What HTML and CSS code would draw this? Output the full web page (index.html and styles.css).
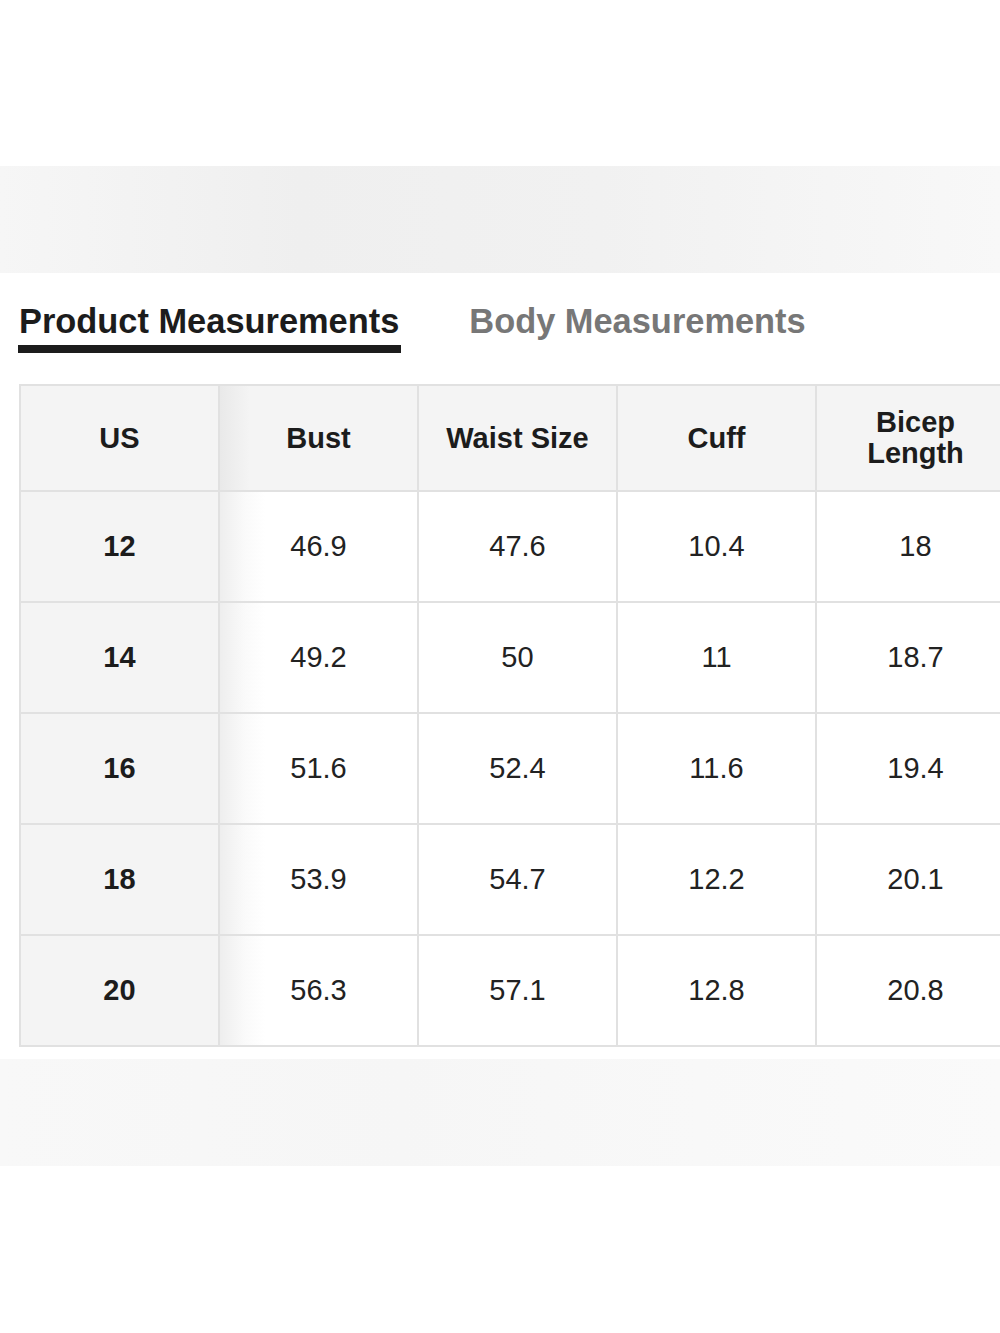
FILE: index.html
```html
<!DOCTYPE html>
<html>
<head>
<meta charset="utf-8">
<link rel="stylesheet" href="styles.css">
</head>
<body>
<div class="page">
  <div class="band band-top"></div>
  <div class="tabs">
    <div class="tab active">Product Measurements</div>
    <div class="tab">Body Measurements</div>
  </div>
  <table class="sizes">
    <thead>
      <tr>
        <th class="first">US</th>
        <th class="second">Bust</th>
        <th>Waist Size</th>
        <th>Cuff</th>
        <th>Bicep<br>Length</th>
      </tr>
    </thead>
    <tbody>
      <tr><th class="first">12</th><td class="second">46.9</td><td>47.6</td><td>10.4</td><td>18</td></tr>
      <tr><th class="first">14</th><td class="second">49.2</td><td>50</td><td>11</td><td>18.7</td></tr>
      <tr><th class="first">16</th><td class="second">51.6</td><td>52.4</td><td>11.6</td><td>19.4</td></tr>
      <tr><th class="first">18</th><td class="second">53.9</td><td>54.7</td><td>12.2</td><td>20.1</td></tr>
      <tr><th class="first">20</th><td class="second">56.3</td><td>57.1</td><td>12.8</td><td>20.8</td></tr>
    </tbody>
  </table>
  <div class="band band-bottom"></div>
</div>
</body>
</html>
```
FILE: styles.css
```css
html, body {
  margin: 0;
  padding: 0;
  background: #ffffff;
  overflow: hidden;
}
body {
  width: 1000px;
  height: 1333px;
  font-family: "Liberation Sans", Arial, sans-serif;
  color: #222222;
}
.page {
  padding-top: 166px;
}
.band {
  height: 107px;
}
.band-top {
  background: linear-gradient(90deg, #f6f6f6 0%, #efefef 30%, #f1f1f1 60%, #f8f8f8 100%);
}
.band-bottom {
  margin-top: 12px;
  background: linear-gradient(90deg, #f8f8f8 0%, #f6f6f6 40%, #fafafa 100%);
}
.tabs {
  display: flex;
  align-items: flex-start;
  padding: 29px 0 0 18px;
  gap: 67px;
}
.tab {
  font-size: 34.4px;
  font-weight: 700;
  line-height: 38px;
  color: #777777;
  padding: 0 2px 5px 1px;
  border-bottom: 8px solid transparent;
  white-space: nowrap;
}
.tab.active {
  color: #1c1c1c;
  border-bottom-color: #1c1c1c;
}
.sizes {
  margin: 31px 0 0 19px;
  border-collapse: collapse;
  table-layout: fixed;
  width: 995px;
}
.sizes th,
.sizes td {
  width: 197px;
  border: 2px solid #e1e1e1;
  text-align: center;
  vertical-align: middle;
  font-size: 29px;
  padding: 0;
}
.sizes thead th {
  height: 104px;
  background: #f4f4f4;
  font-weight: 700;
  line-height: 31px;
  color: #1c1c1c;
}
.sizes tbody th,
.sizes tbody td {
  height: 109px;
}
.sizes tbody th {
  background: #f4f4f4;
  font-weight: 700;
  color: #1c1c1c;
}
.sizes tbody td {
  background: #ffffff;
  font-weight: 400;
  color: #222222;
}
.sizes thead th.second {
  background: linear-gradient(90deg, #e9e9e9 0px, #f4f4f4 30px, #f4f4f4 100%);
}
.sizes tbody td.second {
  background: linear-gradient(90deg, #eeeeee 0px, #fafafa 25px, #ffffff 45px, #ffffff 100%);
}
```
